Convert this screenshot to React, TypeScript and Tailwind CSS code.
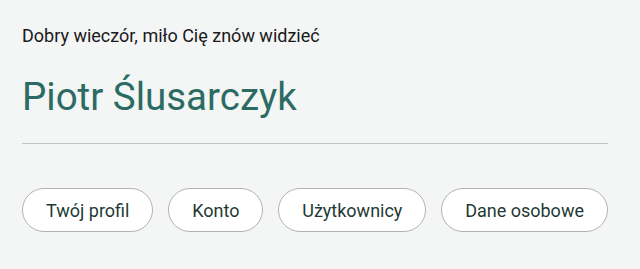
import React from "react";

const tabs = ["Twój profil", "Konto", "Użytkownicy", "Dane osobowe"];

export default function App() {
  return (
    <div
      className="min-h-[269px] w-full bg-[#f4f5f5] pl-[22px] pt-[24px]"
      style={{ fontFamily: "Roboto, 'Noto Sans', sans-serif" }}
    >
      <div className="w-[586px]">
        <p className="text-[18px] leading-[24px] text-[#1a1a1a]">
          Dobry wieczór, miło Cię znów widzieć
        </p>
        <h1 className="mt-[26px] text-[38.5px] leading-[46px] text-[#2b6b64]">
          Piotr Ślusarczyk
        </h1>
        <div className="mt-[23px] h-px bg-[#c4c4c4]" />
        <div className="mt-[44px] flex justify-between">
          {tabs.map((t) => (
            <button
              key={t}
              className="h-[44px] rounded-full border border-[#b3b3b3] bg-white px-[23px] text-[18px] text-[#1f3a36]"
            >
              {t}
            </button>
          ))}
        </div>
      </div>
    </div>
  );
}
